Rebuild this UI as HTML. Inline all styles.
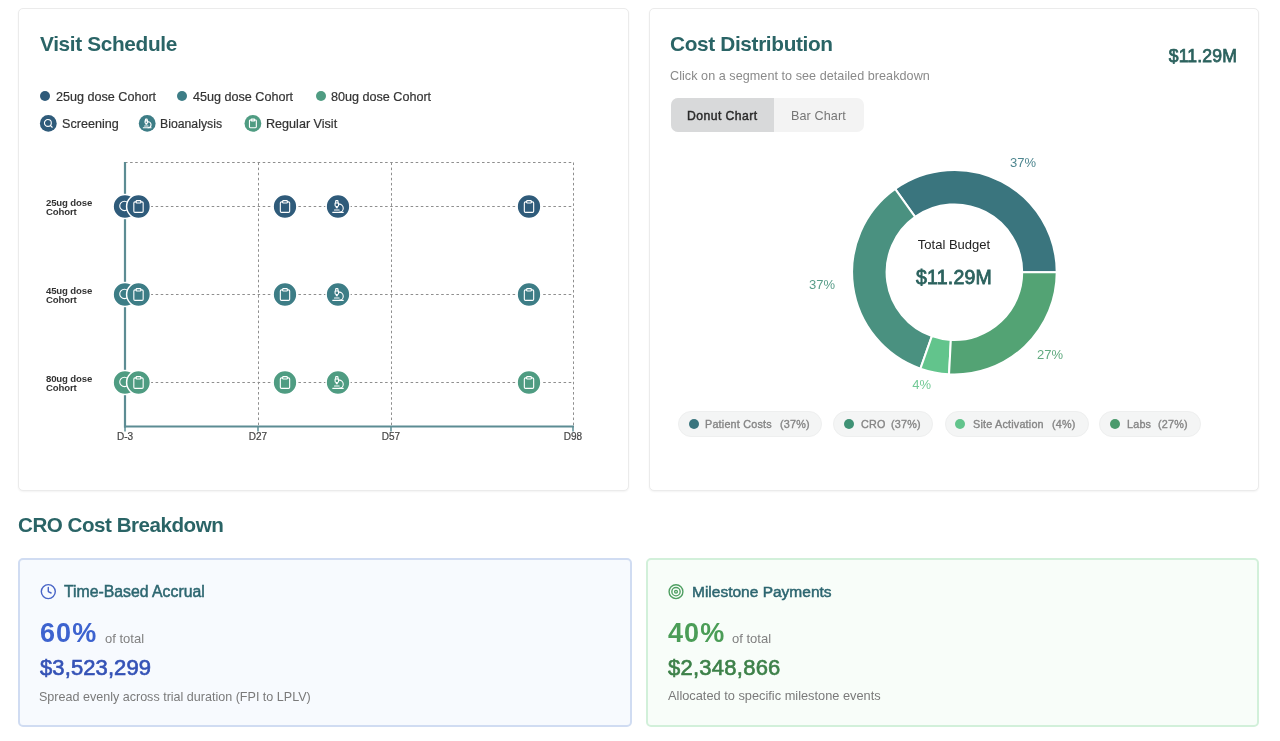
<!DOCTYPE html>
<html><head><meta charset="utf-8"><style>
html,body{margin:0;padding:0;}
body{width:1280px;height:741px;position:relative;overflow:hidden;background:#fff;font-family:'Liberation Sans', sans-serif;}
.t{position:absolute;white-space:nowrap;will-change:transform;}
.r{position:absolute;}
svg{position:absolute;left:0;top:0;}
</style></head><body>
<div class="r" style="left:18px;top:8px;width:611px;height:483px;border:1px solid #ebebeb;border-radius:5px;background:#fff;box-sizing:border-box;box-shadow:0 1px 2px rgba(0,0,0,0.05);"></div>
<div class="r" style="left:649px;top:8px;width:610px;height:482.5px;border:1px solid #ebebeb;border-radius:5px;background:#fff;box-sizing:border-box;box-shadow:0 1px 2px rgba(0,0,0,0.05);"></div>
<div class="r" style="left:40px;top:91px;width:10px;height:10px;border-radius:50%;background:#2f5b7a;"></div>
<div class="r" style="left:177px;top:91px;width:10px;height:10px;border-radius:50%;background:#3d7d86;"></div>
<div class="r" style="left:315.5px;top:91px;width:10px;height:10px;border-radius:50%;background:#4f9c82;"></div>
<div class="r" style="left:670.7px;top:97.8px;width:193.5px;height:34px;border-radius:7px;background:#f3f3f3;"></div>
<div class="r" style="left:670.7px;top:97.8px;width:103.3px;height:34px;border-radius:7px 0 0 7px;background:#d8d9da;"></div>
<div class="r" style="left:677.6px;top:411px;width:144.1px;height:25.7px;box-sizing:border-box;border:1px solid #eeefef;border-radius:13px;background:#f4f5f5;"></div>
<div class="r" style="left:688.6px;top:418.8px;width:10.1px;height:10.1px;border-radius:50%;background:#3a757e;"></div>
<div class="r" style="left:833.4px;top:411px;width:99.6px;height:25.7px;box-sizing:border-box;border:1px solid #eeefef;border-radius:13px;background:#f4f5f5;"></div>
<div class="r" style="left:844px;top:418.8px;width:10.1px;height:10.1px;border-radius:50%;background:#3f9275;"></div>
<div class="r" style="left:944.6px;top:411px;width:144px;height:25.7px;box-sizing:border-box;border:1px solid #eeefef;border-radius:13px;background:#f4f5f5;"></div>
<div class="r" style="left:955.2px;top:418.8px;width:10.1px;height:10.1px;border-radius:50%;background:#62c48c;"></div>
<div class="r" style="left:1099.2px;top:411px;width:101.8px;height:25.7px;box-sizing:border-box;border:1px solid #eeefef;border-radius:13px;background:#f4f5f5;"></div>
<div class="r" style="left:1110px;top:418.8px;width:10.1px;height:10.1px;border-radius:50%;background:#4a9a6c;"></div>
<div class="r" style="left:18px;top:558px;width:614px;height:169px;box-sizing:border-box;border:2px solid #d0dcf2;border-radius:5px;background:#f7fafe;"></div>
<div class="r" style="left:646px;top:558px;width:613px;height:168.5px;box-sizing:border-box;border:2px solid #d2f0da;border-radius:5px;background:#f8fdf9;"></div>
<svg width="1280" height="741" viewBox="0 0 1280 741">
<circle cx="48.3" cy="123.4" r="8.4" fill="#2f5b7a"/>
<g transform="translate(43.15,118.25) scale(0.4292)" fill="none" stroke="#fff" stroke-width="2.6" stroke-linecap="round" stroke-linejoin="round"><circle cx="11" cy="11" r="8"/><path d="m21 21-4.3-4.3"/></g>
<circle cx="147.2" cy="123.4" r="8.4" fill="#3d7d86"/>
<g transform="translate(142.05,118.25) scale(0.4292)" fill="none" stroke="#fff" stroke-width="2.6" stroke-linecap="round" stroke-linejoin="round"><path d="M6 18h8"/><path d="M3 22h18"/><path d="M14 22a7 7 0 1 0 0-14h-1"/><path d="M9 14h2"/><path d="M9 12a2 2 0 0 1-2-2V6h6v4a2 2 0 0 1-2 2Z"/><path d="M12 6V3a1 1 0 0 0-1-1H9a1 1 0 0 0-1 1v3"/></g>
<circle cx="252.9" cy="123.4" r="8.4" fill="#4f9c82"/>
<g transform="translate(247.75,118.25) scale(0.4292)" fill="none" stroke="#fff" stroke-width="2.6" stroke-linecap="round" stroke-linejoin="round"><rect width="8" height="4" x="8" y="2" rx="1" ry="1"/><path d="M16 4h2a2 2 0 0 1 2 2v14a2 2 0 0 1-2 2H6a2 2 0 0 1-2-2V6a2 2 0 0 1 2-2h2"/></g>
<line x1="125" y1="162.5" x2="573" y2="162.5" stroke="#8e8e8e" stroke-width="1" stroke-dasharray="2.55 2.55"/>
<line x1="125" y1="206.5" x2="573" y2="206.5" stroke="#8e8e8e" stroke-width="1" stroke-dasharray="2.55 2.55"/>
<line x1="125" y1="294.5" x2="573" y2="294.5" stroke="#8e8e8e" stroke-width="1" stroke-dasharray="2.55 2.55"/>
<line x1="125" y1="382.5" x2="573" y2="382.5" stroke="#8e8e8e" stroke-width="1" stroke-dasharray="2.55 2.55"/>
<line x1="258.5" y1="162.5" x2="258.5" y2="426.5" stroke="#8e8e8e" stroke-width="1" stroke-dasharray="2.55 2.55"/>
<line x1="391.5" y1="162.5" x2="391.5" y2="426.5" stroke="#8e8e8e" stroke-width="1" stroke-dasharray="2.55 2.55"/>
<line x1="573.5" y1="162.5" x2="573.5" y2="426.5" stroke="#8e8e8e" stroke-width="1" stroke-dasharray="2.55 2.55"/>
<line x1="125" y1="162" x2="125" y2="427.5" stroke="#5c8c93" stroke-width="2.2"/>
<line x1="124" y1="426.5" x2="574" y2="426.5" stroke="#5c8c93" stroke-width="2"/>
<line x1="125" y1="426" x2="125" y2="431.5" stroke="#5c8c93" stroke-width="1.5"/>
<line x1="258" y1="426" x2="258" y2="431.5" stroke="#5c8c93" stroke-width="1.5"/>
<line x1="391" y1="426" x2="391" y2="431.5" stroke="#5c8c93" stroke-width="1.5"/>
<line x1="573" y1="426" x2="573" y2="431.5" stroke="#5c8c93" stroke-width="1.5"/>
<circle cx="125" cy="206.5" r="11.9" fill="#2f5b7a" stroke="#fff" stroke-width="1.5"/>
<g transform="translate(118.00,199.50) scale(0.5833)" fill="none" stroke="#fff" stroke-width="1.9" stroke-linecap="round" stroke-linejoin="round"><circle cx="11" cy="11" r="8"/><path d="m21 21-4.3-4.3"/></g>
<circle cx="138.5" cy="206.5" r="11.9" fill="#2f5b7a" stroke="#fff" stroke-width="1.5"/>
<g transform="translate(131.50,199.50) scale(0.5833)" fill="none" stroke="#fff" stroke-width="1.9" stroke-linecap="round" stroke-linejoin="round"><rect width="8" height="4" x="8" y="2" rx="1" ry="1"/><path d="M16 4h2a2 2 0 0 1 2 2v14a2 2 0 0 1-2 2H6a2 2 0 0 1-2-2V6a2 2 0 0 1 2-2h2"/></g>
<circle cx="285" cy="206.5" r="11.9" fill="#2f5b7a" stroke="#fff" stroke-width="1.5"/>
<g transform="translate(278.00,199.50) scale(0.5833)" fill="none" stroke="#fff" stroke-width="1.9" stroke-linecap="round" stroke-linejoin="round"><rect width="8" height="4" x="8" y="2" rx="1" ry="1"/><path d="M16 4h2a2 2 0 0 1 2 2v14a2 2 0 0 1-2 2H6a2 2 0 0 1-2-2V6a2 2 0 0 1 2-2h2"/></g>
<circle cx="338" cy="206.5" r="11.9" fill="#2f5b7a" stroke="#fff" stroke-width="1.5"/>
<g transform="translate(331.00,199.50) scale(0.5833)" fill="none" stroke="#fff" stroke-width="1.9" stroke-linecap="round" stroke-linejoin="round"><path d="M6 18h8"/><path d="M3 22h18"/><path d="M14 22a7 7 0 1 0 0-14h-1"/><path d="M9 14h2"/><path d="M9 12a2 2 0 0 1-2-2V6h6v4a2 2 0 0 1-2 2Z"/><path d="M12 6V3a1 1 0 0 0-1-1H9a1 1 0 0 0-1 1v3"/></g>
<circle cx="529" cy="206.5" r="11.9" fill="#2f5b7a" stroke="#fff" stroke-width="1.5"/>
<g transform="translate(522.00,199.50) scale(0.5833)" fill="none" stroke="#fff" stroke-width="1.9" stroke-linecap="round" stroke-linejoin="round"><rect width="8" height="4" x="8" y="2" rx="1" ry="1"/><path d="M16 4h2a2 2 0 0 1 2 2v14a2 2 0 0 1-2 2H6a2 2 0 0 1-2-2V6a2 2 0 0 1 2-2h2"/></g>
<circle cx="125" cy="294.5" r="11.9" fill="#3d7d86" stroke="#fff" stroke-width="1.5"/>
<g transform="translate(118.00,287.50) scale(0.5833)" fill="none" stroke="#fff" stroke-width="1.9" stroke-linecap="round" stroke-linejoin="round"><circle cx="11" cy="11" r="8"/><path d="m21 21-4.3-4.3"/></g>
<circle cx="138.5" cy="294.5" r="11.9" fill="#3d7d86" stroke="#fff" stroke-width="1.5"/>
<g transform="translate(131.50,287.50) scale(0.5833)" fill="none" stroke="#fff" stroke-width="1.9" stroke-linecap="round" stroke-linejoin="round"><rect width="8" height="4" x="8" y="2" rx="1" ry="1"/><path d="M16 4h2a2 2 0 0 1 2 2v14a2 2 0 0 1-2 2H6a2 2 0 0 1-2-2V6a2 2 0 0 1 2-2h2"/></g>
<circle cx="285" cy="294.5" r="11.9" fill="#3d7d86" stroke="#fff" stroke-width="1.5"/>
<g transform="translate(278.00,287.50) scale(0.5833)" fill="none" stroke="#fff" stroke-width="1.9" stroke-linecap="round" stroke-linejoin="round"><rect width="8" height="4" x="8" y="2" rx="1" ry="1"/><path d="M16 4h2a2 2 0 0 1 2 2v14a2 2 0 0 1-2 2H6a2 2 0 0 1-2-2V6a2 2 0 0 1 2-2h2"/></g>
<circle cx="338" cy="294.5" r="11.9" fill="#3d7d86" stroke="#fff" stroke-width="1.5"/>
<g transform="translate(331.00,287.50) scale(0.5833)" fill="none" stroke="#fff" stroke-width="1.9" stroke-linecap="round" stroke-linejoin="round"><path d="M6 18h8"/><path d="M3 22h18"/><path d="M14 22a7 7 0 1 0 0-14h-1"/><path d="M9 14h2"/><path d="M9 12a2 2 0 0 1-2-2V6h6v4a2 2 0 0 1-2 2Z"/><path d="M12 6V3a1 1 0 0 0-1-1H9a1 1 0 0 0-1 1v3"/></g>
<circle cx="529" cy="294.5" r="11.9" fill="#3d7d86" stroke="#fff" stroke-width="1.5"/>
<g transform="translate(522.00,287.50) scale(0.5833)" fill="none" stroke="#fff" stroke-width="1.9" stroke-linecap="round" stroke-linejoin="round"><rect width="8" height="4" x="8" y="2" rx="1" ry="1"/><path d="M16 4h2a2 2 0 0 1 2 2v14a2 2 0 0 1-2 2H6a2 2 0 0 1-2-2V6a2 2 0 0 1 2-2h2"/></g>
<circle cx="125" cy="382.5" r="11.9" fill="#4f9c82" stroke="#fff" stroke-width="1.5"/>
<g transform="translate(118.00,375.50) scale(0.5833)" fill="none" stroke="#fff" stroke-width="1.9" stroke-linecap="round" stroke-linejoin="round"><circle cx="11" cy="11" r="8"/><path d="m21 21-4.3-4.3"/></g>
<circle cx="138.5" cy="382.5" r="11.9" fill="#4f9c82" stroke="#fff" stroke-width="1.5"/>
<g transform="translate(131.50,375.50) scale(0.5833)" fill="none" stroke="#fff" stroke-width="1.9" stroke-linecap="round" stroke-linejoin="round"><rect width="8" height="4" x="8" y="2" rx="1" ry="1"/><path d="M16 4h2a2 2 0 0 1 2 2v14a2 2 0 0 1-2 2H6a2 2 0 0 1-2-2V6a2 2 0 0 1 2-2h2"/></g>
<circle cx="285" cy="382.5" r="11.9" fill="#4f9c82" stroke="#fff" stroke-width="1.5"/>
<g transform="translate(278.00,375.50) scale(0.5833)" fill="none" stroke="#fff" stroke-width="1.9" stroke-linecap="round" stroke-linejoin="round"><rect width="8" height="4" x="8" y="2" rx="1" ry="1"/><path d="M16 4h2a2 2 0 0 1 2 2v14a2 2 0 0 1-2 2H6a2 2 0 0 1-2-2V6a2 2 0 0 1 2-2h2"/></g>
<circle cx="338" cy="382.5" r="11.9" fill="#4f9c82" stroke="#fff" stroke-width="1.5"/>
<g transform="translate(331.00,375.50) scale(0.5833)" fill="none" stroke="#fff" stroke-width="1.9" stroke-linecap="round" stroke-linejoin="round"><path d="M6 18h8"/><path d="M3 22h18"/><path d="M14 22a7 7 0 1 0 0-14h-1"/><path d="M9 14h2"/><path d="M9 12a2 2 0 0 1-2-2V6h6v4a2 2 0 0 1-2 2Z"/><path d="M12 6V3a1 1 0 0 0-1-1H9a1 1 0 0 0-1 1v3"/></g>
<circle cx="529" cy="382.5" r="11.9" fill="#4f9c82" stroke="#fff" stroke-width="1.5"/>
<g transform="translate(522.00,375.50) scale(0.5833)" fill="none" stroke="#fff" stroke-width="1.9" stroke-linecap="round" stroke-linejoin="round"><rect width="8" height="4" x="8" y="2" rx="1" ry="1"/><path d="M16 4h2a2 2 0 0 1 2 2v14a2 2 0 0 1-2 2H6a2 2 0 0 1-2-2V6a2 2 0 0 1 2-2h2"/></g>
<path d="M1056.70,272.20 A102.3,102.3 0 0 0 895.14,188.81 L915.12,216.93 A67.8,67.8 0 0 1 1022.20,272.20 Z" fill="#3a757e" stroke="#fff" stroke-width="2"/>
<path d="M895.14,188.81 A102.3,102.3 0 0 0 920.42,368.69 L931.88,336.15 A67.8,67.8 0 0 1 915.12,216.93 Z" fill="#4a9180" stroke="#fff" stroke-width="2"/>
<path d="M920.42,368.69 A102.3,102.3 0 0 0 949.05,374.36 L950.85,339.91 A67.8,67.8 0 0 1 931.88,336.15 Z" fill="#62c48c" stroke="#fff" stroke-width="2"/>
<path d="M949.05,374.36 A102.3,102.3 0 0 0 1056.70,272.20 L1022.20,272.20 A67.8,67.8 0 0 1 950.85,339.91 Z" fill="#53a374" stroke="#fff" stroke-width="2"/>
<g transform="translate(39.90,583.20) scale(0.7000)" fill="none" stroke="#4864c6" stroke-width="2" stroke-linecap="round" stroke-linejoin="round"><circle cx="12" cy="12" r="10"/><polyline points="12 6 12 12 16 14"/></g>
<g transform="translate(667.70,583.40) scale(0.6917)" fill="none" stroke="#4f9f62" stroke-width="2" stroke-linecap="round" stroke-linejoin="round"><circle cx="12" cy="12" r="10"/><circle cx="12" cy="12" r="6"/><circle cx="12" cy="12" r="2"/></g>
</svg>
<div class="t" style="left:40.3px;top:34.09px;font-size:20.8px;line-height:20.8px;color:#2a6466;font-weight:700;letter-spacing:-0.35px;">Visit Schedule</div>
<div class="t" style="left:670.2px;top:33.99px;font-size:20.8px;line-height:20.8px;color:#2a6466;font-weight:700;letter-spacing:-0.35px;">Cost Distribution</div>
<div class="t" style="left:55.6px;top:90.63px;font-size:12.6px;line-height:12.6px;color:#333;-webkit-text-stroke:0.2px #333;">25ug dose Cohort</div>
<div class="t" style="left:193px;top:90.63px;font-size:12.6px;line-height:12.6px;color:#333;-webkit-text-stroke:0.2px #333;">45ug dose Cohort</div>
<div class="t" style="left:330.75px;top:90.63px;font-size:12.6px;line-height:12.6px;color:#333;-webkit-text-stroke:0.2px #333;">80ug dose Cohort</div>
<div class="t" style="left:62px;top:118.13px;font-size:12.6px;line-height:12.6px;color:#333;-webkit-text-stroke:0.2px #333;">Screening</div>
<div class="t" style="left:160.2px;top:118.40px;font-size:12.28px;line-height:12.28px;color:#333;-webkit-text-stroke:0.2px #333;">Bioanalysis</div>
<div class="t" style="left:266.25px;top:118.13px;font-size:12.6px;line-height:12.6px;color:#333;-webkit-text-stroke:0.2px #333;">Regular Visit</div>
<div class="t" style="left:125px;top:431.73px;font-size:10px;line-height:10px;color:#444;transform:translateX(-50%);-webkit-text-stroke:0.2px #444;">D-3</div>
<div class="t" style="left:258px;top:431.73px;font-size:10px;line-height:10px;color:#444;transform:translateX(-50%);-webkit-text-stroke:0.2px #444;">D27</div>
<div class="t" style="left:391px;top:431.73px;font-size:10px;line-height:10px;color:#444;transform:translateX(-50%);-webkit-text-stroke:0.2px #444;">D57</div>
<div class="t" style="left:573px;top:431.73px;font-size:10px;line-height:10px;color:#444;transform:translateX(-50%);-webkit-text-stroke:0.2px #444;">D98</div>
<div class="t" style="left:45.8px;top:198.27px;font-size:9.6px;line-height:9.6px;color:#333;font-weight:700;letter-spacing:-0.15px;">25ug dose</div>
<div class="t" style="left:45.8px;top:207.47px;font-size:9.6px;line-height:9.6px;color:#333;font-weight:700;letter-spacing:-0.15px;">Cohort</div>
<div class="t" style="left:45.8px;top:286.27px;font-size:9.6px;line-height:9.6px;color:#333;font-weight:700;letter-spacing:-0.15px;">45ug dose</div>
<div class="t" style="left:45.8px;top:295.47px;font-size:9.6px;line-height:9.6px;color:#333;font-weight:700;letter-spacing:-0.15px;">Cohort</div>
<div class="t" style="left:45.8px;top:374.27px;font-size:9.6px;line-height:9.6px;color:#333;font-weight:700;letter-spacing:-0.15px;">80ug dose</div>
<div class="t" style="left:45.8px;top:383.47px;font-size:9.6px;line-height:9.6px;color:#333;font-weight:700;letter-spacing:-0.15px;">Cohort</div>
<div class="t" style="left:1010px;top:155.99px;font-size:13px;line-height:13px;color:#4f8790;">37%</div>
<div class="t" style="left:835.2px;top:277.99px;font-size:13px;line-height:13px;color:#5a9e8a;transform:translateX(-100%);">37%</div>
<div class="t" style="left:930.8px;top:378.09px;font-size:13px;line-height:13px;color:#72c996;transform:translateX(-100%);">4%</div>
<div class="t" style="left:1036.5px;top:348.29px;font-size:13px;line-height:13px;color:#62ab80;">27%</div>
<div class="t" style="left:954px;top:237.99px;font-size:13px;line-height:13px;color:#222;transform:translateX(-50%);">Total Budget</div>
<div class="t" style="left:954.3px;top:267.89px;font-size:19.5px;line-height:19.5px;color:#2c625e;transform:translateX(-50%);-webkit-text-stroke:0.8px #2c625e;letter-spacing:0.2px;">$11.29M</div>
<div class="t" style="left:1237.3px;top:48.30px;font-size:17.6px;line-height:17.6px;color:#2c625e;transform:translateX(-100%);-webkit-text-stroke:0.75px #2c625e;letter-spacing:0.15px;">$11.29M</div>
<div class="t" style="left:670.3px;top:70.13px;font-size:12.6px;line-height:12.6px;color:#8a8a8a;letter-spacing:0.05px;">Click on a segment to see detailed breakdown</div>
<div class="t" style="left:687.3px;top:110.07px;font-size:12.2px;line-height:12.2px;color:#2b2b2b;-webkit-text-stroke:0.45px #2b2b2b;letter-spacing:0.45px;">Donut Chart</div>
<div class="t" style="left:791.3px;top:109.63px;font-size:12.6px;line-height:12.6px;color:#767676;letter-spacing:0.1px;">Bar Chart</div>
<div class="t" style="left:704.7px;top:418.76px;font-size:10.8px;line-height:10.8px;color:#858585;-webkit-text-stroke:0.35px #858585;letter-spacing:0.2px;">Patient Costs</div>
<div class="t" style="left:780px;top:418.76px;font-size:10.8px;line-height:10.8px;color:#858585;-webkit-text-stroke:0.35px #858585;letter-spacing:0.2px;">(37%)</div>
<div class="t" style="left:861px;top:418.76px;font-size:10.8px;line-height:10.8px;color:#858585;-webkit-text-stroke:0.35px #858585;letter-spacing:0.2px;">CRO</div>
<div class="t" style="left:890.8px;top:418.76px;font-size:10.8px;line-height:10.8px;color:#858585;-webkit-text-stroke:0.35px #858585;letter-spacing:0.2px;">(37%)</div>
<div class="t" style="left:972.5px;top:418.76px;font-size:10.8px;line-height:10.8px;color:#858585;-webkit-text-stroke:0.35px #858585;letter-spacing:0.2px;">Site Activation</div>
<div class="t" style="left:1052.2px;top:418.76px;font-size:10.8px;line-height:10.8px;color:#858585;-webkit-text-stroke:0.35px #858585;letter-spacing:0.2px;">(4%)</div>
<div class="t" style="left:1126.9px;top:418.76px;font-size:10.8px;line-height:10.8px;color:#858585;-webkit-text-stroke:0.35px #858585;letter-spacing:0.2px;">Labs</div>
<div class="t" style="left:1158.4px;top:418.76px;font-size:10.8px;line-height:10.8px;color:#858585;-webkit-text-stroke:0.35px #858585;letter-spacing:0.2px;">(27%)</div>
<div class="t" style="left:17.6px;top:515.46px;font-size:20.6px;line-height:20.6px;color:#2a6466;font-weight:700;letter-spacing:-0.48px;">CRO Cost Breakdown</div>
<div class="t" style="left:64.4px;top:583.92px;font-size:15.8px;line-height:15.8px;color:#2d6670;-webkit-text-stroke:0.5px #2d6670;letter-spacing:0px;">Time-Based Accrual</div>
<div class="t" style="left:40px;top:620.44px;font-size:27px;line-height:27px;color:#3d63cf;font-weight:700;letter-spacing:1.1px;">60%</div>
<div class="t" style="left:104.6px;top:631.79px;font-size:13px;line-height:13px;color:#808080;">of total</div>
<div class="t" style="left:40.3px;top:656.67px;font-size:22px;line-height:22px;color:#3452b6;-webkit-text-stroke:0.65px #3452b6;letter-spacing:0.1px;">$3,523,299</div>
<div class="t" style="left:39.3px;top:690.67px;font-size:12.55px;line-height:12.55px;color:#7a7a7a;">Spread evenly across trial duration (FPI to LPLV)</div>
<div class="t" style="left:692px;top:584.18px;font-size:15.5px;line-height:15.5px;color:#2d6670;-webkit-text-stroke:0.5px #2d6670;letter-spacing:0px;">Milestone Payments</div>
<div class="t" style="left:667.5px;top:620.44px;font-size:27px;line-height:27px;color:#4b9d57;font-weight:700;letter-spacing:1.1px;">40%</div>
<div class="t" style="left:731.8px;top:631.79px;font-size:13px;line-height:13px;color:#808080;">of total</div>
<div class="t" style="left:667.8px;top:656.67px;font-size:22px;line-height:22px;color:#3d8149;-webkit-text-stroke:0.65px #3d8149;letter-spacing:0.25px;">$2,348,866</div>
<div class="t" style="left:668px;top:690.46px;font-size:12.8px;line-height:12.8px;color:#7a7a7a;">Allocated to specific milestone events</div>
</body></html>
